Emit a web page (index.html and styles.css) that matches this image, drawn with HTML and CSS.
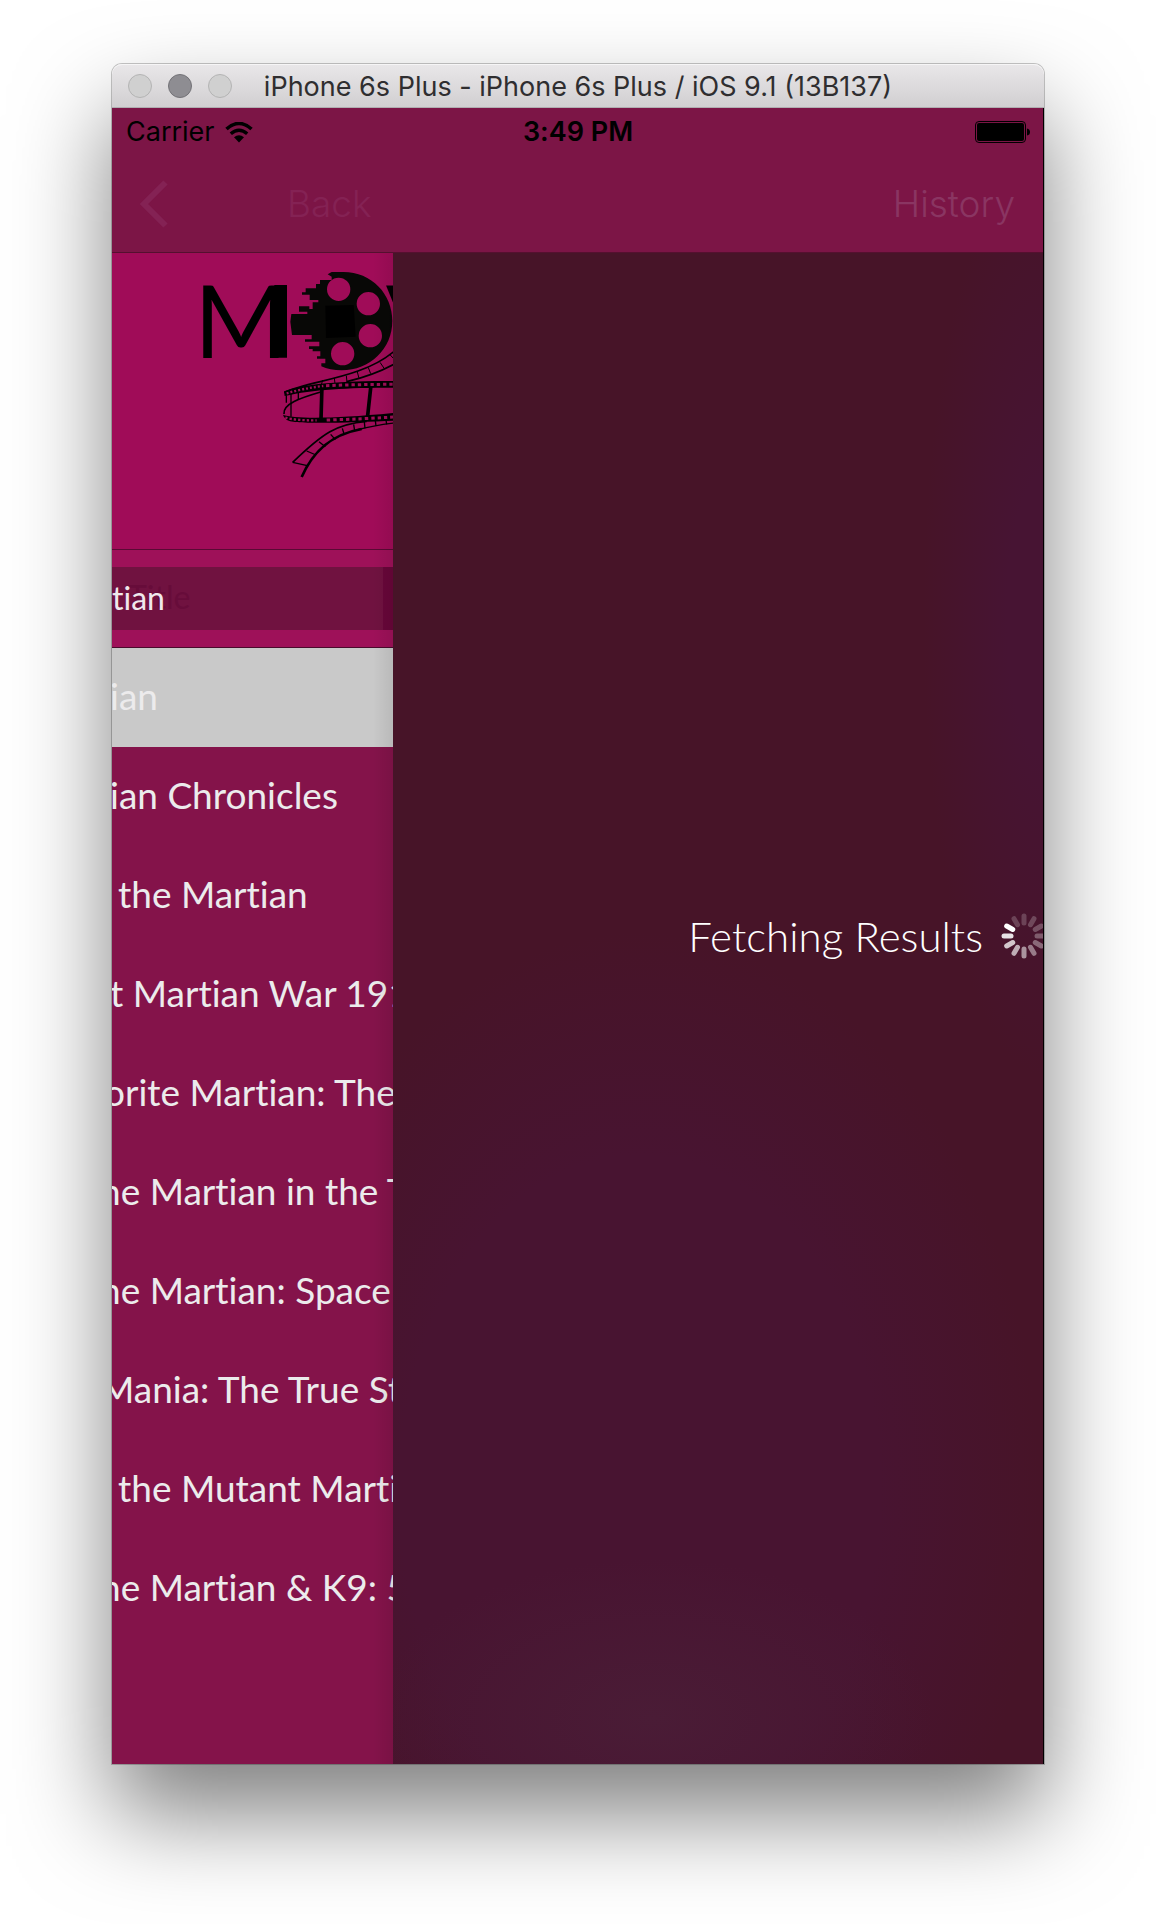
FILE: index.html
```html
<!DOCTYPE html>
<html lang="en">
<head>
<meta charset="utf-8">
<meta name="viewport" content="width=device-width, initial-scale=1">
<title>iPhone 6s Plus</title>
<link rel="stylesheet" href="styles.css">
</head>
<body>
<div class="window">
  <header class="titlebar">
    <div class="lights">
      <span class="light"></span>
      <span class="light light-dark"></span>
      <span class="light"></span>
    </div>
    <h1 class="title">iPhone 6s Plus - iPhone 6s Plus / iOS 9.1 (13B137)</h1>
  </header>

  <div class="screen">
    <div class="topbar">
      <div class="status">
        <div class="carrier">
          <span>Carrier</span>
          <svg class="wifi" viewBox="0 0 28 21" aria-hidden="true">
            <path d="M1.500 7Q14-4 26.500 7" fill="none" stroke="#000" stroke-width="3.600"/>
            <path d="M5.800 11.800Q14 4.500 22.200 11.800" fill="none" stroke="#000" stroke-width="3.400"/>
            <path d="M14 20.500L9 15.300Q14 11.300 19 15.300Z"/>
          </svg>
        </div>
        <span class="time">3:49 PM</span>
        <svg class="battery" viewBox="0 0 55 22" aria-hidden="true">
          <rect x=".5" y=".5" width="50" height="21" rx="3.500" fill="none" stroke="#000"/>
          <rect x="2" y="2" width="47" height="18" rx="2"/>
          <path d="M52 7.500Q55 8 55 11T52 14.500Z"/>
        </svg>
      </div>
      <nav class="nav">
        <button class="nav-button back" type="button">
          <svg class="chevron" viewBox="0 0 28 48" aria-hidden="true">
            <path d="M25.500 2.500L4 24L25.500 45.500" fill="none" stroke="currentColor" stroke-width="6"/>
          </svg>
          Back
        </button>
        <button class="nav-button history" type="button">History</button>
      </nav>
    </div>

    <main class="content">
      <section class="search-view">
        <div class="logo">
          <svg class="logo-art" viewBox="0 9 639 690" role="img" aria-label="Movie logo">
            <text class="logo-text" x="42" y="323">M</text>
            <path d="M283 105H321V323H283Z"/>
            <text class="logo-text" x="617" y="323">V</text>
            <path fill="#080806" fill-rule="evenodd" d="M443 73L455 66H490C575 66 637 132 637 213C637 296 570 361 485 361C462 361 440 357 424 349V340H436V326H411V319H421V304H398V297H387V289H418V275H375V268H395V255H336L331 215L334 192H382V185H357V169H388V177H398V157H415V150H389V134H366V127H377V115H408V102H420V90H455V80ZM476 83A35 35 0 1 0 476 153A35 35 0 1 0 476 83ZM565 126A35 35 0 1 0 565 196A35 35 0 1 0 565 126ZM571 222A35 35 0 1 0 571 292A35 35 0 1 0 571 222ZM488 276A35 35 0 1 0 488 346A35 35 0 1 0 488 276Z"/>
            <path d="M436 167L521 165L527 260L438 264Z"/>
            <g fill="none" stroke="#000" stroke-width="5">
              <path d="M313 428C390 390 540 388 641 305M500 395Q580 376 641 343"/>
              <path stroke-width="3" d="M428 390L424 405M463 384L465 401M499 377L501 397M532 366L537 385M565 353L572 371M600 337L613 356M628 312L641 326"/>
              <path d="M312 492C308 462 360 444 422 426"/>
              <path stroke-width="4" d="M319 436V458M333 432V500M355 426V448"/>
              <path stroke-width="11" d="M426 405L423 508M573 405L562 506"/>
            </g>
            <path d="M312 424C380 400 480 393 640 393V413C500 413 400 418 314 438Z"/>
            <path d="M309 494C340 506 450 508 640 489V512C560 515 400 522 345 516Q312 512 309 494Z"/>
            <g fill="none" stroke="#a00c58" stroke-width="9">
              <path stroke-width="7" stroke-dasharray="6 6" d="M320 430Q370 415 430 408"/>
              <path stroke-dasharray="10 9" d="M438 407Q540 403 640 403"/>
              <path stroke-width="7" stroke-dasharray="7 6" d="M316 503Q350 512 410 511"/>
              <path stroke-dasharray="10 9" d="M440 510Q550 507 640 501"/>
            </g>
            <g fill="none" stroke="#000" stroke-width="5">
              <path d="M338 637C430 548 470 522 560 514"/>
              <path stroke-width="4" d="M530 540Q580 526 641 519"/>
              <path stroke-width="8" d="M365 681C395 612 445 555 545 537"/>
              <path stroke-width="4" d="M338 637L382 647M380 603L408 615M417 575L436 590M452 553L466 569M487 535L493 555M521 523L524 543M553 516L555 535M586 512L588 528M618 510L620 523"/>
            </g>
          </svg>
        </div>
        <form class="search">
          <div class="field">
            <label class="ghost" for="movie-title">Title</label>
            <input class="input" id="movie-title" type="text" value="tian">
          </div>
        </form>
        <ul class="results">
          <li class="row row-selected">ian</li>
          <li class="row">ian Chronicles</li>
          <li class="row row-word">the Martian</li>
          <li class="row">t Martian War 191</li>
          <li class="row row-half">orite Martian: The</li>
          <li class="row row-cut">he Martian in the T</li>
          <li class="row row-cut">he Martian: Space</li>
          <li class="row row-cut">Mania: The True St</li>
          <li class="row row-word">the Mutant Marti</li>
          <li class="row row-cut">he Martian &amp; K9: 5</li>
        </ul>
      </section>

      <section class="detail">
        <p class="loading" role="status">Fetching Results</p>
        <svg class="spinner" viewBox="-23 -23 46 46" aria-hidden="true">
          <g stroke="#fff" stroke-width="5" stroke-linecap="round">
            <path d="M0-13V-20" opacity=".2"/>
            <path d="M0-13V-20" opacity=".22" transform="rotate(30)"/>
            <path d="M0-13V-20" opacity=".25" transform="rotate(60)"/>
            <path d="M0-13V-20" opacity=".3" transform="rotate(90)"/>
            <path d="M0-13V-20" opacity=".36" transform="rotate(120)"/>
            <path d="M0-13V-20" opacity=".44" transform="rotate(150)"/>
            <path d="M0-13V-20" opacity=".54" transform="rotate(180)"/>
            <path d="M0-13V-20" opacity=".65" transform="rotate(210)"/>
            <path d="M0-13V-20" opacity=".76" transform="rotate(240)"/>
            <path d="M0-13V-20" opacity=".88" transform="rotate(270)"/>
            <path d="M0-13V-20" transform="rotate(300)"/>
            <path d="M0-13V-20" opacity=".2" transform="rotate(330)"/>
          </g>
        </svg>
      </section>
    </main>
  </div>
</div>
</body>
</html>
```
FILE: styles.css
```css
* {
  box-sizing: border-box;
}

body {
  margin: 0;
  padding: 64px 112px 160px;
  background: #fff;
  font-family: Lato, "Liberation Sans", sans-serif;
  font-variant-ligatures: none;
}

.window {
  border-radius: 10px 10px 0 0;
  box-shadow: 0 0 0 1px rgba(0, 0, 0, 0.22), 0 50px 96px rgba(0, 0, 0, 0.5);
}

/* Simulator title bar */
.titlebar {
  display: grid;
  grid-template-columns: 1fr auto 1fr;
  align-items: center;
  height: 44px;
  padding: 0 16px;
  border-bottom: 1px solid #b0aeb0;
  border-radius: 10px 10px 0 0;
  background: linear-gradient(#e9e7e9, #d1cfd1);
  box-shadow: inset 0 1px 0 #f6f5f6;
}

.lights {
  display: flex;
  gap: 16px;
}

.light {
  width: 24px;
  height: 24px;
  border: 1px solid #b4b4b4;
  border-radius: 50%;
  background: #d0d0d0;
}

.light-dark {
  border-color: #737277;
  background: #8e8d92;
}

.title {
  margin: 0;
  padding-top: 2px;
  color: #2f2e30;
  font: 400 27px/32px Inter, "Liberation Sans", sans-serif;
}

/* Phone screen */
.screen {
  overflow: hidden;
  border-right: 1px solid #000;
  background: #471429;
}

.topbar {
  border-bottom: 1px solid #55102f;
  background: #7c1546;
  font-family: Inter, "Liberation Sans", sans-serif;
}

.status {
  display: grid;
  grid-template-columns: 1fr auto 1fr;
  align-items: center;
  height: 48px;
  padding: 0 13px 0 14px;
  color: #000;
  font-size: 27px;
  line-height: 32px;
}

.carrier {
  display: flex;
  align-items: center;
  gap: 10px;
}

.wifi {
  width: 28px;
  height: 21px;
}

.time {
  font-weight: 600;
}

.battery {
  justify-self: end;
  width: 55px;
  height: 22px;
}

.nav {
  display: flex;
  align-items: center;
  justify-content: space-between;
  height: 96px;
  padding: 0 28px;
}

.nav-button {
  display: flex;
  align-items: center;
  gap: 119px;
  padding: 0;
  border: 0;
  background: none;
  color: #842254;
  font: 300 37px/48px Inter, "Liberation Sans", sans-serif;
}

.history {
  color: #8a3562;
}

.chevron {
  width: 28px;
  height: 48px;
}

.content {
  display: grid;
  grid-template-columns: 281px 1fr;
}

/* Search screen, sliding out to the left */
.search-view {
  position: relative;
  overflow: hidden;
  padding-bottom: 126px;
  background: #84134a;
}

.search-view::after {
  content: "";
  position: absolute;
  inset: 0 0 0 auto;
  width: 20px;
  background: linear-gradient(90deg, transparent, rgba(0, 0, 0, 0.08));
}

.logo {
  display: flex;
  justify-content: flex-end;
  height: 297px;
  border-bottom: 1px solid #5a0a34;
  background: #a00c58;
}

.logo-art {
  width: 213px;
  height: 230px;
}

.logo-text {
  font: 400 303px Lato, sans-serif;
}

.search {
  padding: 17px 0;
  border-bottom: 1px solid #4a0a2c;
  background: #9e1159;
}

.field {
  position: relative;
  height: 63px;
  border-right: 10px solid #680639;
  background: #701240;
}

.ghost {
  position: absolute;
  top: 10px;
  left: 16px;
  color: #670c3a;
  font-size: 32px;
  line-height: 40px;
}

.input {
  position: relative;
  width: 100%;
  height: 60px;
  padding: 0;
  border: 0;
  background: none;
  color: #f0e8ec;
  font: 400 32px/40px Lato, sans-serif;
  font-variant-ligatures: none;
}

.results {
  margin: 0;
  padding: 0;
  list-style: none;
}

.row {
  height: 99px;
  color: #ecebec;
  font-size: 37px;
  line-height: 95px;
  text-indent: -2px;
  white-space: nowrap;
}

.row-selected {
  background: #c9c9c9;
}

.row-word {
  text-indent: 6px;
}

.row-half {
  text-indent: -8px;
}

.row-cut {
  text-indent: -12px;
}

/* Results screen, sliding in from the right */
.detail {
  display: flex;
  align-items: center;
  justify-content: flex-end;
  gap: 18px;
  overflow: hidden;
  padding-bottom: 146px;
  background:
    radial-gradient(ellipse 280px 160px at 40% 97%, #4a1c36, transparent),
    radial-gradient(ellipse 120px 460px at 100% 24%, #471433 30%, transparent),
    radial-gradient(ellipse 400px 560px at 38% 82%, #481431 60%, transparent),
    #471428;
}

.loading {
  margin: 0;
  color: #fff;
  font-size: 42px;
  font-weight: 300;
  line-height: 48px;
  white-space: nowrap;
}

.spinner {
  flex: none;
  width: 46px;
  height: 46px;
  margin-right: -4px;
}
```
